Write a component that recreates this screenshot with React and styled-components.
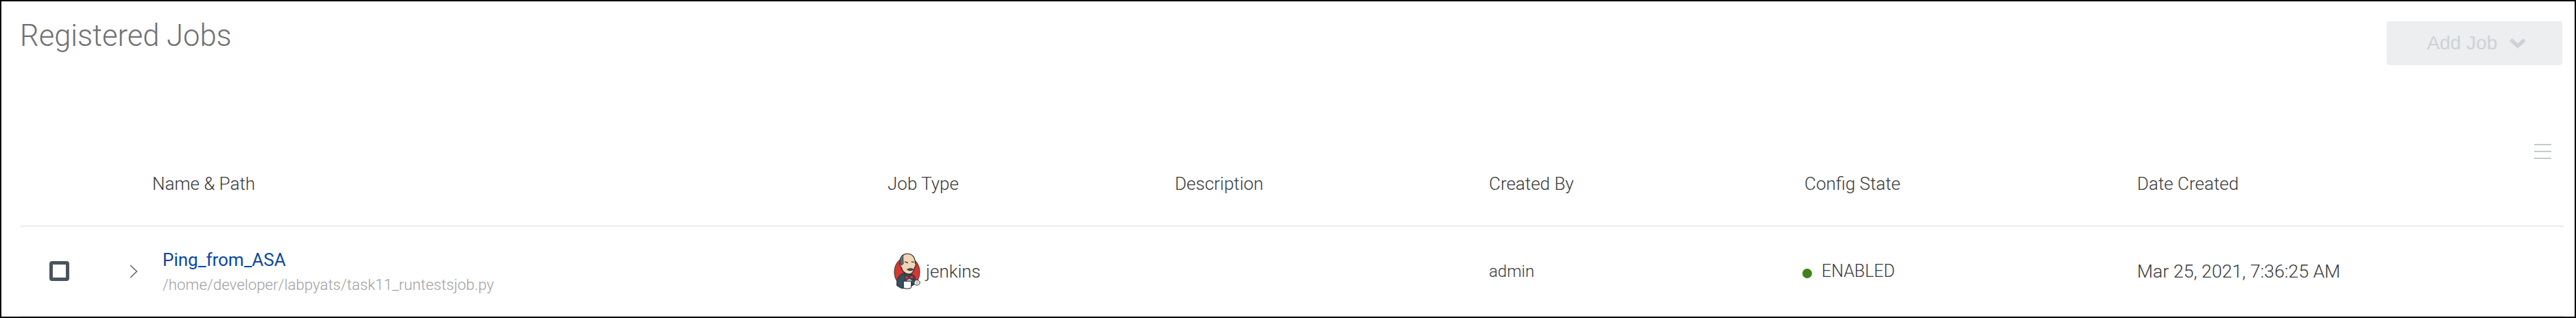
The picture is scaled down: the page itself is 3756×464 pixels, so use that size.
import styled, { createGlobalStyle } from "styled-components";

const COLUMNS = "192px 1072px 419px 458px 460px 485px 1fr 43px";

const headers = ["Name & Path", "Job Type", "Description", "Created By", "Config State", "Date Created"];

function JenkinsLogo() {
    return (
        <svg width="40" height="54" viewBox="0 0 42 56">
            <ellipse cx="20.5" cy="29" rx="19.5" ry="23" fill="#d33833" stroke="#3a2a2a" strokeWidth="1" />
            <path d="M5 50 C4 40 8 33 15 31 L29 33 C33 36 35 41 33 47 L26 50 L25 54 L12 54 Z" fill="#335061" stroke="#1f2a33" strokeWidth="1" />
            <path d="M10 14 C10 5 15 1 21 1 C29 1 33 7 33 15 C35 18 33 21 32 22 C31 29 27 33 22 32 C17 31 13 27 12 22 C9 20 9 16 10 14 Z" fill="#f0d6b7" stroke="#231f20" strokeWidth="1.2" />
            <path d="M12 19 C8 14 9 7 14 3 C15 7 14 12 15 16 Z" fill="#6d6b6d" stroke="#231f20" strokeWidth="0.8" />
            <path d="M17 13 L22 15 M27 13 L31 14 M21 25 C24 23 28 23 30 25 C27 27 24 27 21 25 Z" fill="#49728b" stroke="#231f20" strokeWidth="1.2" />
            <path d="M17 33 L23 37 L30 33 L30 40 L24 38 L18 41 Z" fill="#d33833" stroke="#231f20" strokeWidth="0.7" />
            <path d="M20 42 L24 39 L28 42 L24 47 Z" fill="#a9c3d3" />
            <path d="M15 43 L15 53 C17 55 24 55 27 53 L27 43 Z" fill="#fff" stroke="#231f20" strokeWidth="1" />
            <path d="M33 42 C36 40 41 42 40 46 C40 49 35 50 32 48 C31 46 31 44 33 42 Z" fill="#f4f1ea" stroke="#231f20" strokeWidth="1" />
            <path d="M34 44 L38 44 M34 46 L38 46" stroke="#777" strokeWidth="0.7" />
        </svg>
    );
}

export default function App() {
    return (
        <Frame>
            <GlobalStyle />
            <TopBar>
                <Title>Registered Jobs</Title>
                <AddButton>
                    Add Job
                    <svg width="26" height="16" viewBox="0 0 26 16">
                        <path d="M3 3 L13 12 L23 3" fill="none" stroke="#ced2d6" strokeWidth="5.5" />
                    </svg>
                </AddButton>
            </TopBar>
            <HeaderRow>
                <span />
                {headers.map((h) => (
                    <HeaderCell key={h}>{h}</HeaderCell>
                ))}
                <MenuIcon>
                    <span />
                    <span />
                    <span />
                </MenuIcon>
            </HeaderRow>
            <JobRow>
                <SelectCell>
                    <Checkbox />
                    <svg width="12" height="20" viewBox="0 0 12 20">
                        <path d="M1 1 L10.5 10 L1 19" fill="none" stroke="#58595b" strokeWidth="1.4" />
                    </svg>
                </SelectCell>
                <NameCell>
                    <JobLink>Ping_from_ASA</JobLink>
                    <JobPath>/home/developer/labpyats/task11_runtestsjob.py</JobPath>
                </NameCell>
                <TypeCell>
                    <JenkinsLogo />
                    jenkins
                </TypeCell>
                <Cell />
                <Cell $size={24}>admin</Cell>
                <StateCell>
                    <Dot />
                    ENABLED
                </StateCell>
                <Cell $size={26.7}>Mar 25, 2021, 7:36:25 AM</Cell>
            </JobRow>
        </Frame>
    );
}

const GlobalStyle = createGlobalStyle`
    html, body{
        margin: 0;
        padding: 0;
        background: #fff;
    }
`;

const Frame = styled.div`
    width: 3756px;
    height: 464px;
    box-sizing: border-box;
    border: 2px solid #000;
    background: #fff;
    display: flex;
    flex-direction: column;
    font-family: "Roboto", "Liberation Sans", sans-serif;
    overflow: hidden;
`;

const TopBar = styled.div`
    display: flex;
    justify-content: space-between;
    align-items: flex-start;
    height: 128px;
    padding: 29px 18px 0 27px;
    box-sizing: border-box;
`;

const Title = styled.h1`
    margin: -2px 0 0;
    font-size: 43.5px;
    line-height: 48px;
    font-weight: 300;
    color: #6f7073;
`;

const AddButton = styled.div`
    width: 256px;
    height: 64px;
    padding-left: 7px;
    box-sizing: border-box;
    border-radius: 4px;
    background: #eceef0;
    color: #ced2d6;
    font-family: "Liberation Sans", sans-serif;
    font-size: 28px;
    display: flex;
    align-items: center;
    justify-content: center;
    gap: 17px;
`;

const HeaderRow = styled.div`
    display: grid;
    grid-template-columns: ${COLUMNS};
    align-items: start;
    height: 201px;
    margin: 0 16px 0 28px;
    padding-top: 80px;
    border-bottom: 2px solid #ebebeb;
    box-sizing: border-box;
`;

const MenuIcon = styled.div`
    width: 25px;
    display: flex;
    flex-direction: column;
    gap: 8px;
    span{
        height: 2px;
        background: #c4c9cd;
    }
`;

const HeaderCell = styled.div`
    margin-top: 43px;
    font-size: 26px;
    line-height: 30px;
    font-weight: 300;
    color: #39393b;
`;

const JobRow = styled.div`
    display: grid;
    grid-template-columns: ${COLUMNS};
    align-items: center;
    flex: 1;
    margin: 0 16px 0 28px;
    border-bottom: 2px solid #ebebeb;
`;

const Cell = styled.div`
    font-size: ${(p) => p.$size || 26}px;
    font-weight: 300;
    color: #39393b;
`;

const SelectCell = styled.div`
    display: flex;
    align-items: center;
    gap: 88px;
    padding-left: 42px;
`;

const Checkbox = styled.div`
    width: 29px;
    height: 29px;
    box-sizing: border-box;
    border: 5px solid #49545e;
    border-radius: 4px;
`;

const NameCell = styled.div`
    display: flex;
    flex-direction: column;
    gap: 8px;
    padding-left: 15px;
`;

const JobLink = styled.a`
    font-size: 26px;
    color: #0b46a6;
`;

const JobPath = styled.div`
    font-size: 22.3px;
    font-weight: 300;
    color: #a0a0a0;
`;

const TypeCell = styled(Cell)`
    display: flex;
    align-items: center;
    gap: 7px;
    padding-left: 9px;
`;

const StateCell = styled(Cell)`
    display: flex;
    align-items: center;
    gap: 14px;
    margin-left: -3px;
    font-size: 25px;
`;

const Dot = styled.span`
    width: 14px;
    height: 14px;
    margin-top: 6px;
    border-radius: 50%;
    background: #43801b;
`;
